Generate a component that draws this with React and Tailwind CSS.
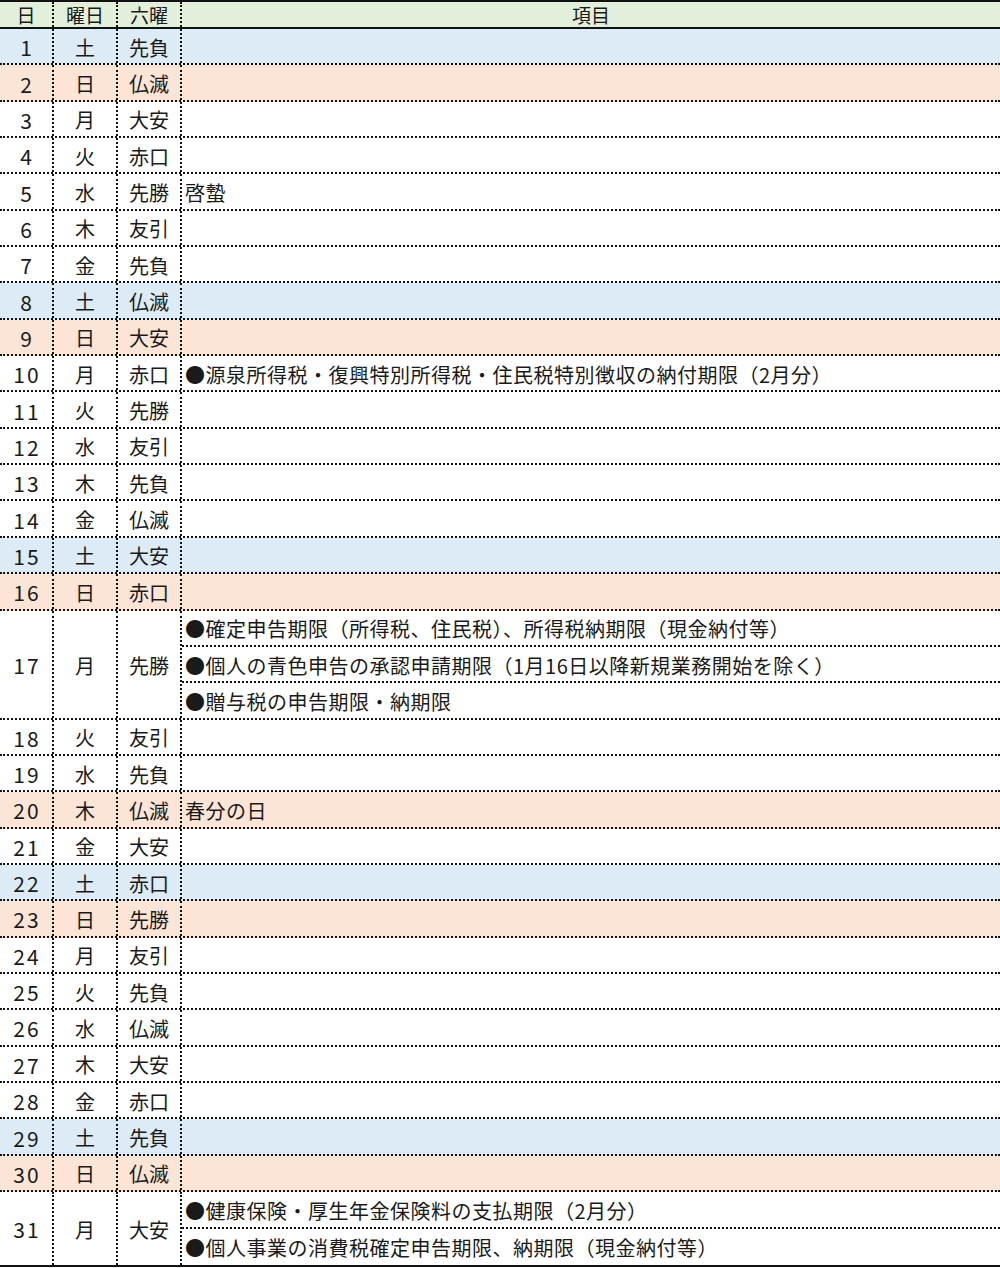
import React from "react";

const rows = [
  [1, "土", "先負", "b", []],
  [2, "日", "仏滅", "p", []],
  [3, "月", "大安", "", []],
  [4, "火", "赤口", "", []],
  [5, "水", "先勝", "", ["啓蟄"]],
  [6, "木", "友引", "", []],
  [7, "金", "先負", "", []],
  [8, "土", "仏滅", "b", []],
  [9, "日", "大安", "p", []],
  [10, "月", "赤口", "", ["●源泉所得税・復興特別所得税・住民税特別徴収の納付期限（2月分）"]],
  [11, "火", "先勝", "", []],
  [12, "水", "友引", "", []],
  [13, "木", "先負", "", []],
  [14, "金", "仏滅", "", []],
  [15, "土", "大安", "b", []],
  [16, "日", "赤口", "p", []],
  [17, "月", "先勝", "", [
    "●確定申告期限（所得税、住民税）、所得税納期限（現金納付等）",
    "●個人の青色申告の承認申請期限（1月16日以降新規業務開始を除く）",
    "●贈与税の申告期限・納期限",
  ]],
  [18, "火", "友引", "", []],
  [19, "水", "先負", "", []],
  [20, "木", "仏滅", "p", ["春分の日"]],
  [21, "金", "大安", "", []],
  [22, "土", "赤口", "b", []],
  [23, "日", "先勝", "p", []],
  [24, "月", "友引", "", []],
  [25, "火", "先負", "", []],
  [26, "水", "仏滅", "", []],
  [27, "木", "大安", "", []],
  [28, "金", "赤口", "", []],
  [29, "土", "先負", "b", []],
  [30, "日", "仏滅", "p", []],
  [31, "月", "大安", "", [
    "●健康保険・厚生年金保険料の支払期限（2月分）",
    "●個人事業の消費税確定申告期限、納期限（現金納付等）",
  ]],
];

function Row({ r, last }) {
  const [d, w, rk, c, items] = r;
  const bg = c === "b" ? "bg-[#ddebf7]" : c === "p" ? "bg-[#fce4d6]" : "bg-white";
  const n = Math.max(1, items.length);
  const hCls =
    n === 3 ? "h-[109.05px]" : n === 2 ? (last ? "h-[72.5px]" : "h-[72.7px]") : "h-[36.35px]";
  const border = last ? "" : "border-b-2 border-dotted border-[#111]";
  return (
    <div className={`grid grid-cols-[54px_64px_64px_1fr] ${hCls} ${bg} ${border}`}>
      <div className="flex items-center justify-center border-r-2 border-dotted border-[#111] pt-[3px] pl-[2px] text-[21px] tracking-[2px]">{d}</div>
      <div className="flex items-center justify-center border-r-2 border-dotted border-[#111] pt-[3px]">{w}</div>
      <div className="flex items-center justify-center border-r-2 border-dotted border-[#111] pt-[3px]">{rk}</div>
      <div className="flex flex-col">
        {items.length === 0 ? (
          <div className="flex-1" />
        ) : (
          items.map((t, i) => (
            <div
              key={i}
              className={`flex flex-1 items-center pl-[3px] pt-[3px] whitespace-nowrap tracking-[0.5px] ${
                i < items.length - 1 ? "border-b-2 border-dotted border-[#111]" : ""
              }`}
            >
              {t}
            </div>
          ))
        )}
      </div>
    </div>
  );
}

export default function App() {
  return (
    <div
      className="w-[1000px] bg-white text-[20px] leading-none text-[#1a1a1a]"
      style={{ fontFamily: '"Noto Sans CJK JP", "Noto Sans", sans-serif' }}
    >
      <div className="border-t-2 border-b-2 border-[#111]">
        <div className="grid h-[27px] grid-cols-[54px_64px_64px_1fr] border-b-2 border-solid border-[#111] bg-[#e2efda] text-[19px]">
          <div className="flex items-center justify-center border-r-2 border-dotted border-[#111]">日</div>
          <div className="flex items-center justify-center border-r-2 border-dotted border-[#111]">曜日</div>
          <div className="flex items-center justify-center border-r-2 border-dotted border-[#111]">六曜</div>
          <div className="flex items-center justify-center">項目</div>
        </div>
        {rows.map((r, i) => (
          <Row key={r[0]} r={r} last={i === rows.length - 1} />
        ))}
      </div>
    </div>
  );
}
